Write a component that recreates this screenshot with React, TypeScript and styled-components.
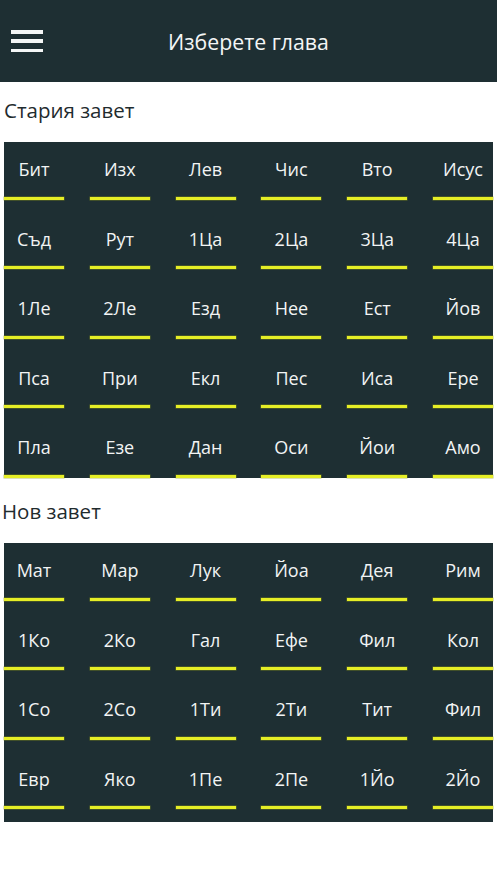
import React from 'react';
import styled, { createGlobalStyle } from 'styled-components';

const GlobalStyle = createGlobalStyle`
  html, body {
    margin: 0;
    padding: 0;
    background: #ffffff;
  }
  body {
    font-family: 'Open Sans', 'Noto Sans', 'DejaVu Sans', sans-serif;
  }
`;

const Page = styled.div`
  width: 497px;
  min-height: 883px;
  background: #fff;
`;

const Header = styled.header`
  height: 82px;
  background: #1e2f33;
  display: grid;
  grid-template-columns: 1fr auto 1fr;
  align-items: center;
`;

const MenuButton = styled.button`
  justify-self: start;
  margin-left: 11px;
  width: 32px;
  height: 22px;
  padding: 0;
  border: none;
  background: transparent;
  display: flex;
  flex-direction: column;
  justify-content: space-between;
  cursor: pointer;

  span {
    display: block;
    height: 3.5px;
    background: #f4f6f6;
  }
`;

const Title = styled.h1`
  margin: 0;
  color: #f4f6f6;
  font-size: 21.3px;
  font-weight: 400;
`;

const SectionTitle = styled.h2<{ $indent: number; $top: number }>`
  margin: ${(p) => p.$top}px 0 14px ${(p) => p.$indent}px;
  line-height: 36px;
  font-size: 20.5px;
  font-weight: 400;
  color: #1f2b2e;
`;

const BookGrid = styled.div<{ $bottom: number }>`
  margin: 0 4px;
  padding-bottom: ${(p) => p.$bottom}px;
  background: #1e2f33;
  display: grid;
  grid-template-columns: repeat(6, 60px);
  justify-content: space-between;
  row-gap: 12px;
`;

const Cell = styled.div`
  height: 57.5px;
  display: flex;
  flex-direction: column;
  cursor: pointer;
`;

const Label = styled.span`
  flex: 1;
  display: flex;
  align-items: center;
  justify-content: center;
  color: #f2f4f4;
  font-size: 18px;
  white-space: nowrap;
`;

const Underline = styled.span`
  height: 3px;
  background: #e6ee26;
  box-shadow: 0 0 0 0.5px rgba(150, 160, 20, 0.6);
`;

const oldTestament = [
  'Бит', 'Изх', 'Лев', 'Чис', 'Вто', 'Исус',
  'Съд', 'Рут', '1Ца', '2Ца', '3Ца', '4Ца',
  '1Ле', '2Ле', 'Езд', 'Нее', 'Ест', 'Йов',
  'Пса', 'При', 'Екл', 'Пес', 'Иса', 'Ере',
  'Пла', 'Езе', 'Дан', 'Оси', 'Йои', 'Амо',
];

const newTestament = [
  'Мат', 'Мар', 'Лук', 'Йоа', 'Дея', 'Рим',
  '1Ко', '2Ко', 'Гал', 'Ефе', 'Фил', 'Кол',
  '1Со', '2Со', '1Ти', '2Ти', 'Тит', 'Фил',
  'Евр', 'Яко', '1Пе', '2Пе', '1Йо', '2Йо',
];

const Books = ({ books, bottom }: { books: string[]; bottom: number }) => (
  <BookGrid $bottom={bottom}>
    {books.map((b, i) => (
      <Cell key={i}>
        <Label>{b}</Label>
        <Underline />
      </Cell>
    ))}
  </BookGrid>
);

const App = () => (
  <Page>
    <GlobalStyle />
    <Header>
      <MenuButton aria-label="menu">
        <span />
        <span />
        <span />
      </MenuButton>
      <Title>Изберете глава</Title>
      <div />
    </Header>
    <SectionTitle $indent={4} $top={10}>Стария завет</SectionTitle>
    <Books books={oldTestament} bottom={0} />
    <SectionTitle $indent={2} $top={15.5}>Нов завет</SectionTitle>
    <Books books={newTestament} bottom={13} />
  </Page>
);

export default App;
